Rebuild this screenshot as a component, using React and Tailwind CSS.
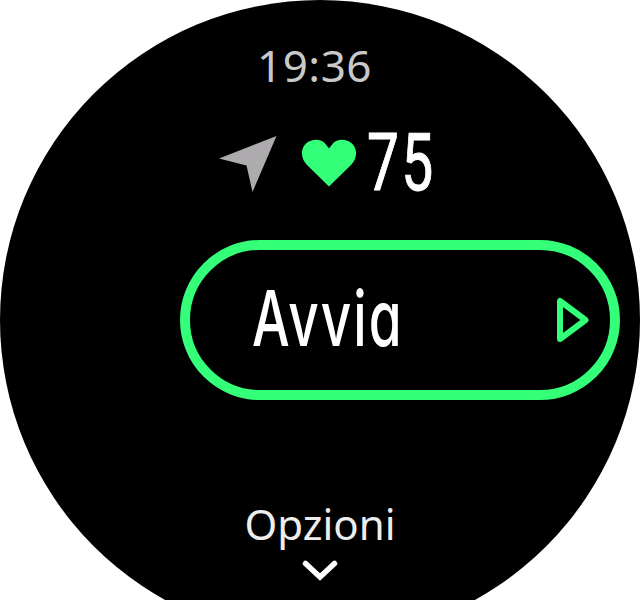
function LocationIcon() {
  return (
    <svg width="60" height="60" viewBox="0 0 60 60" fill="#adabad">
      <path d="M58.500 1 L34.500 57 L28.500 30.500 L1 23.500 Z" />
    </svg>
  );
}

function HeartIcon() {
  return (
    <svg width="56" height="50" viewBox="0 0 56 50" fill="#33ff78">
      <path d="M28 47.500 L5.5 25.500 C-1 18.500 0 9 5 4.500 C11 -0.500 20 -0.500 24.500 5 L28 9.500 L31.500 5 C36 -0.500 45 -0.500 51 4.500 C56 9 57 18.500 50.500 25.500 Z" />
    </svg>
  );
}

function PlayIcon() {
  return (
    <svg width="36" height="48" viewBox="0 0 36 48" fill="none" stroke="#33ff78" strokeWidth="6" strokeLinejoin="round">
      <path d="M5 5 V43 L30.500 24 Z" />
    </svg>
  );
}

function ChevronIcon() {
  return (
    <svg width="36" height="22" viewBox="0 0 36 22" fill="none" stroke="#fff" strokeWidth="5.5" strokeLinecap="round">
      <path d="M3.500 3.500 L18 17 L32.500 3.500" />
    </svg>
  );
}

function App() {
  return (
    <div className="w-[640px] h-[600px] overflow-hidden bg-white">
      <div className="w-[640px] h-[640px] rounded-full bg-black flex flex-col">
        <div className="h-[60px] mt-[35px] pl-[257px] font-['Noto_Sans',sans-serif] text-[44px] leading-[60px] tracking-[0.5px] text-[#c9c9c9]">
          19:36
        </div>

        <div className="h-16 mt-[35px] pl-[218px] flex items-start">
          <div className="pt-[5px]">
            <LocationIcon />
          </div>
          <div className="pt-[9px] ml-[23px]">
            <HeartIcon />
          </div>
          <span className="ml-[10px] origin-left translate-y-px scale-x-[0.72] font-['Roboto',sans-serif] text-[79px] leading-[64px] tracking-[3px] text-white [-webkit-text-stroke:1px_white]">
            75
          </span>
        </div>

        <button className="w-[440px] h-[160px] mt-[46px] ml-[180px] border-[10px] border-[#33ff78] rounded-full flex items-center justify-between pl-[62px] pr-[19px]">
          <span className="origin-left -translate-y-0.5 scale-x-[0.69] font-['Inter',sans-serif] font-medium text-[77px] leading-[80px] tracking-[3px] text-white [font-feature-settings:'cv11']">
            Avvia
          </span>
          <PlayIcon />
        </button>

        <div className="mt-[94px] h-[60px] text-center font-['Noto_Sans',sans-serif] text-[42px] leading-[60px] text-[#ededed]">
          Opzioni
        </div>
        <div className="mt-[6px] flex justify-center">
          <ChevronIcon />
        </div>
      </div>
    </div>
  );
}

export default App;
